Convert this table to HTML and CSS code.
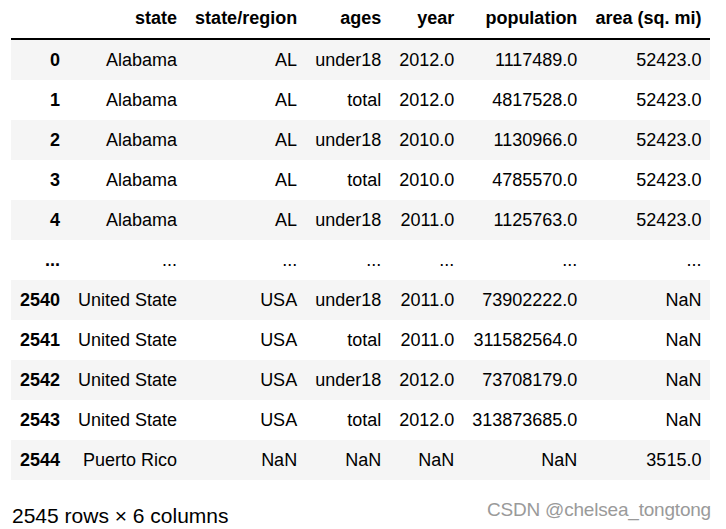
FILE: index.html
```html
<!DOCTYPE html>
<html>
<head>
<meta charset="utf-8">
<link rel="stylesheet" href="styles.css">
</head>
<body>
<div class="output">
  <table class="dataframe">
    <thead>
      <tr><th></th><th>state</th><th>state/region</th><th>ages</th><th>year</th><th>population</th><th>area (sq. mi)</th></tr>
    </thead>
    <tbody>
      <tr><th>0</th><td>Alabama</td><td>AL</td><td>under18</td><td>2012.0</td><td>1117489.0</td><td>52423.0</td></tr>
      <tr><th>1</th><td>Alabama</td><td>AL</td><td>total</td><td>2012.0</td><td>4817528.0</td><td>52423.0</td></tr>
      <tr><th>2</th><td>Alabama</td><td>AL</td><td>under18</td><td>2010.0</td><td>1130966.0</td><td>52423.0</td></tr>
      <tr><th>3</th><td>Alabama</td><td>AL</td><td>total</td><td>2010.0</td><td>4785570.0</td><td>52423.0</td></tr>
      <tr><th>4</th><td>Alabama</td><td>AL</td><td>under18</td><td>2011.0</td><td>1125763.0</td><td>52423.0</td></tr>
      <tr><th>...</th><td>...</td><td>...</td><td>...</td><td>...</td><td>...</td><td>...</td></tr>
      <tr><th>2540</th><td>United State</td><td>USA</td><td>under18</td><td>2011.0</td><td>73902222.0</td><td>NaN</td></tr>
      <tr><th>2541</th><td>United State</td><td>USA</td><td>total</td><td>2011.0</td><td>311582564.0</td><td>NaN</td></tr>
      <tr><th>2542</th><td>United State</td><td>USA</td><td>under18</td><td>2012.0</td><td>73708179.0</td><td>NaN</td></tr>
      <tr><th>2543</th><td>United State</td><td>USA</td><td>total</td><td>2012.0</td><td>313873685.0</td><td>NaN</td></tr>
      <tr><th>2544</th><td>Puerto Rico</td><td>NaN</td><td>NaN</td><td>NaN</td><td>NaN</td><td>3515.0</td></tr>
    </tbody>
  </table>
  <p class="shape">2545 rows × 6 columns</p>
</div>
<div class="watermark">CSDN @chelsea_tongtong</div>
</body>
</html>
```

FILE: styles.css
```css
html, body {
  margin: 0;
  padding: 0;
  background: #ffffff;
}
body {
  position: relative;
  width: 726px;
  height: 529px;
  overflow: hidden;
  font-family: "Liberation Sans", Arial, sans-serif;
  color: #000000;
}
.output {
  padding-left: 11px;
}
.dataframe {
  border-collapse: collapse;
  border-spacing: 0;
  font-size: 18px;
  line-height: 22px;
}
.dataframe th,
.dataframe td {
  text-align: right;
  white-space: nowrap;
  padding: 9px 9px;
  vertical-align: middle;
}
.dataframe thead th {
  font-weight: bold;
  padding-top: 7px;
  padding-bottom: 9px;
  border-bottom: 2px solid #000000;
}
.dataframe tbody th {
  font-weight: bold;
}
.dataframe tbody tr:nth-child(odd) {
  background: #f5f5f5;
}
.shape {
  margin: 24px 0 0 1px;
  font-size: 21px;
  line-height: 24px;
}
.watermark {
  position: absolute;
  right: 15px;
  top: 498px;
  font-size: 19px;
  line-height: 24px;
  color: #9a9a9a;
  letter-spacing: -0.2px;
}
```
